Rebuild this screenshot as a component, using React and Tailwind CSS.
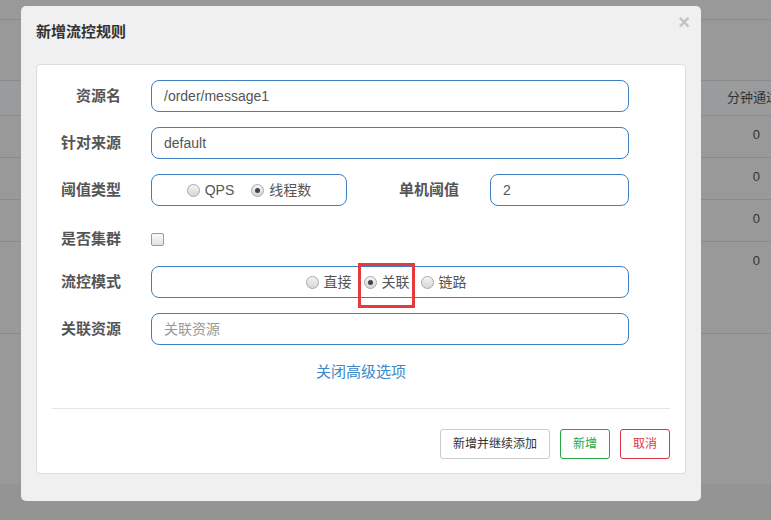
function Radio({ checked }) {
  return (
    <span className="relative inline-flex h-[13px] w-[13px] items-center justify-center rounded-full border border-[#a9a9a9] bg-gradient-to-b from-[#f4f4f4] to-[#d6d6d6]">
      {checked && <span className="h-[5px] w-[5px] rounded-full bg-[#444]" />}
    </span>
  )
}

function Label({ children, className = '' }) {
  return (
    <div className={`text-right text-[15px] font-bold text-[#555] ${className}`}>{children}</div>
  )
}

export default function App() {
  const rows = ['0', '0', '0', '0']
  return (
    <div
      className="relative h-[520px] w-[771px] overflow-hidden bg-[#999]"
      style={{ fontFamily: '"Liberation Sans", "Noto Sans CJK SC", sans-serif' }}
    >
      {/* background table behind the overlay */}
      <div className="flex h-full flex-col">
        <div className="h-[20px] border-b border-[#8a8a8a]" />
        <div className="h-[61px] border-b border-[#8a8a8a]" />
        <div className="flex h-[35px] items-center justify-end border-b border-[#8a8a8a] bg-[#9a9b9d] text-[13px] text-[#333]">
          <span className="-mr-[8px] whitespace-nowrap">分钟通过</span>
        </div>
        {rows.map((v, i) => (
          <div
            key={i}
            className={`flex items-start justify-end border-b border-[#8a8a8a] pr-[11px] pt-[9px] text-[13px] text-[#333] ${i === 3 ? 'h-[92px]' : 'h-[42px]'}`}
          >
            {v}
          </div>
        ))}
        <div className="h-[150px]" />
        <div className="flex-1 bg-[#949494]" />
      </div>

      {/* modal */}
      <div className="absolute left-[21px] top-[6px] flex h-[495px] w-[680px] flex-col rounded-[5px] bg-[#f0f0f0] px-[15px] pb-[27px]">
        <div className="relative flex h-[58px] items-center pb-[6px]">
          <h4 className="text-[15px] font-bold text-[#333]">新增流控规则</h4>
          <span className="absolute -right-[4px] top-[6px] text-[20px] font-bold leading-none text-[#c2c2c2]">×</span>
        </div>
        <div className="relative flex flex-1 flex-col rounded-[4px] border border-[#ddd] bg-white pt-[15px]">
          <div className="flex flex-col gap-[15px]">
            <div className="flex h-[32px] items-center gap-[30px]">
              <Label className="w-[84px]">资源名</Label>
              <div className="flex h-[32px] w-[478px] items-center rounded-[8px] border border-[#3d7fc1] px-[12px] text-[14px] text-[#555]">
                /order/message1
              </div>
            </div>
            <div className="flex h-[32px] items-center gap-[30px]">
              <Label className="w-[84px]">针对来源</Label>
              <div className="flex h-[32px] w-[478px] items-center rounded-[8px] border border-[#3d7fc1] px-[12px] text-[14px] text-[#555]">
                default
              </div>
            </div>
            <div className="flex h-[32px] items-center">
              <Label className="w-[84px]">阈值类型</Label>
              <div className="ml-[30px] flex h-[32px] w-[196px] items-center justify-center gap-[5px] rounded-[8px] border border-[#3d7fc1] text-[14px] text-[#555]">
                <Radio />
                <span>QPS</span>
                <span className="w-[7px]" />
                <Radio checked />
                <span>线程数</span>
              </div>
              <Label className="w-[112px]">单机阈值</Label>
              <div className="ml-[31px] flex h-[32px] w-[139px] items-center rounded-[8px] border border-[#3d7fc1] px-[12px] text-[14px] text-[#555]">
                2
              </div>
            </div>
            <div className="flex h-[30px] items-center gap-[30px] pt-[6px]">
              <Label className="w-[84px]">是否集群</Label>
              <span className="h-[13px] w-[13px] rounded-[2px] border border-[#999] bg-gradient-to-b from-[#fafafa] to-[#e2e2e2]" />
            </div>
            <div className="flex h-[32px] items-center gap-[30px]">
              <Label className="w-[84px]">流控模式</Label>
              <div className="flex h-[32px] w-[478px] items-center justify-center gap-[5px] rounded-[8px] border border-[#3d7fc1] pr-[8px] text-[14px] text-[#555]">
                <Radio />
                <span>直接</span>
                <span className="w-[2px]" />
                <Radio checked />
                <span>关联</span>
                <span className="w-[1px]" />
                <Radio />
                <span>链路</span>
              </div>
            </div>
            <div className="flex h-[32px] items-center gap-[30px]">
              <Label className="w-[84px]">关联资源</Label>
              <div className="flex h-[32px] w-[478px] items-center rounded-[8px] border border-[#3d7fc1] px-[12px] text-[14px] text-[#999]">
                关联资源
              </div>
            </div>
          </div>
          <div className="mt-[16px] flex justify-center text-[15px] text-[#3a87c9]">
            <span>关闭高级选项</span>
          </div>
          <div className="mx-[15px] mt-[24px] border-t border-[#e5e5e5]" />
          <div className="mt-[20px] flex justify-end gap-[10px] pr-[15px]">
            <button className="h-[30px] rounded-[3px] border border-[#ccc] bg-white px-[12px] text-[12px] text-[#333]">
              新增并继续添加
            </button>
            <button className="h-[30px] w-[50px] rounded-[3px] border border-[#28a745] bg-white text-[12px] text-[#28a745]">
              新增
            </button>
            <button className="h-[30px] w-[50px] rounded-[3px] border border-[#dc3545] bg-white text-[12px] text-[#dc3545]">
              取消
            </button>
          </div>
        </div>
      </div>

      {/* red annotation box */}
      <div className="absolute left-[358px] top-[263px] h-[45px] w-[57px] border-[3px] border-[#e8393b]" />
    </div>
  )
}
